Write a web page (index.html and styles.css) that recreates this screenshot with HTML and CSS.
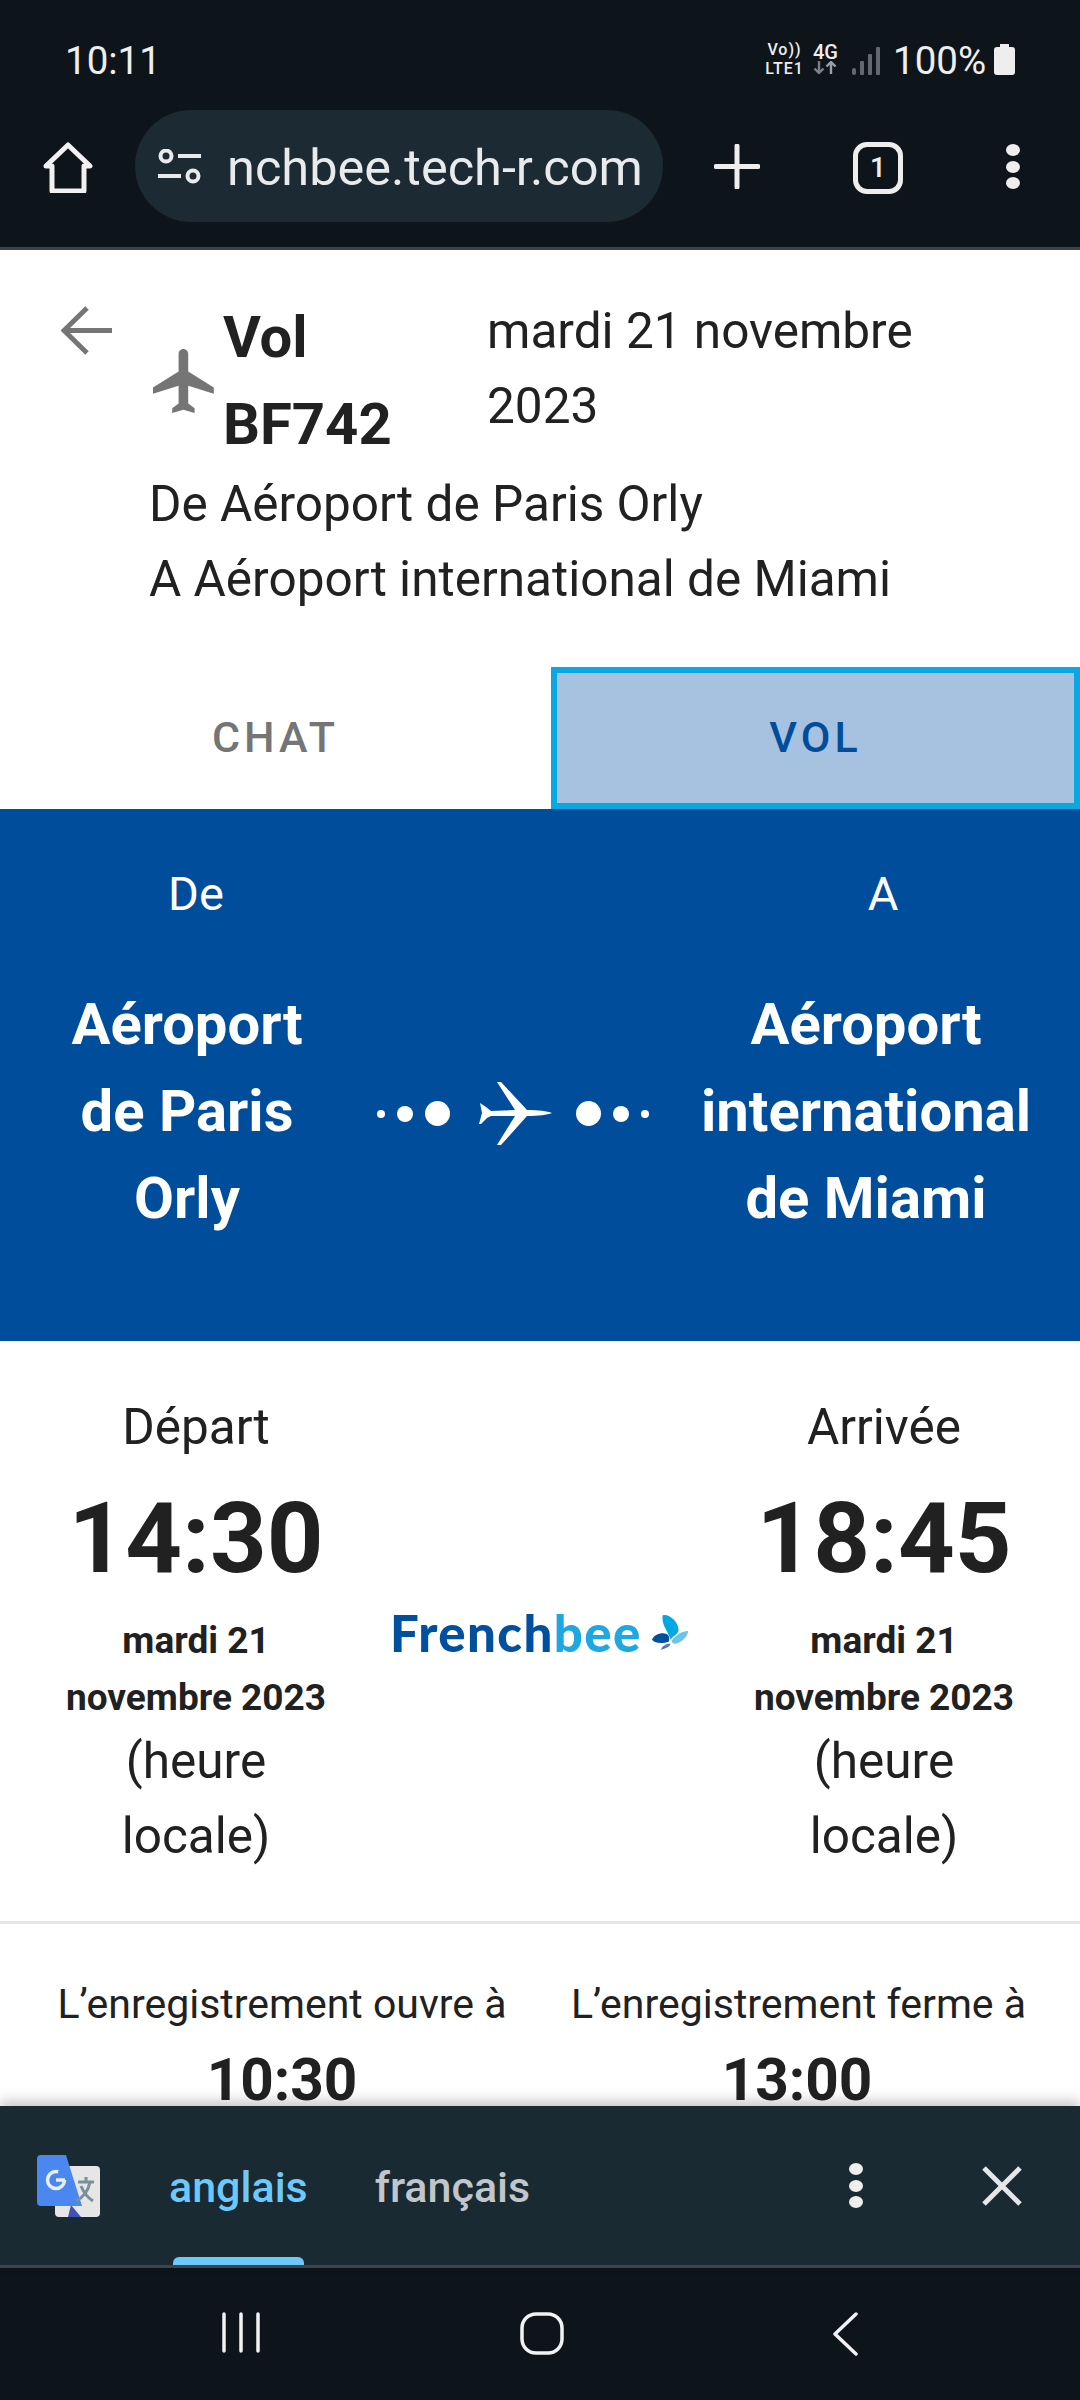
FILE: index.html
```html
<!DOCTYPE html>
<html lang="fr">
<head>
    <meta charset="UTF-8">
    <meta name="viewport" content="width=device-width, initial-scale=1.0">
    <title>Vol BF742</title>
    <link rel="stylesheet" href="styles.css">
</head>
<body>
    <!-- Barre d'etat du telephone -->
    <div class="status-bar">
        <span class="status-time">10:11</span>
        <div class="status-icons">
            <div class="mini-stack volte"><span>Vo))</span><span>LTE1</span></div>
            <div class="mini-stack net">
                <span>4G</span>
                <svg width="25" height="13" viewBox="0 0 25 13" fill="none" stroke-width="2.4">
                    <path d="M6 0v12M1.5 7.500 6 12l4.500-4.500" stroke="#7b8084"/>
                    <path d="M18 13V1M13.500 5.500 18 1l4.500 4.500" stroke="#9da1a4"/>
                </svg>
            </div>
            <svg class="signal" width="28" height="28" viewBox="0 0 28 28" fill="#62686c">
                <rect x="0" y="21" width="4" height="7" rx="2"/>
                <rect x="8" y="14" width="4" height="14" rx="1"/>
                <rect x="16" y="7" width="4" height="21" rx="1"/>
                <rect x="24" y="0" width="4" height="28" rx="1"/>
            </svg>
            <span class="status-battery">100%</span>
            <svg width="21" height="31" viewBox="0 0 21 31" fill="#eeeeee">
                <path d="M6 0h9v3h3a3 3 0 0 1 3 3v22a3 3 0 0 1-3 3H3a3 3 0 0 1-3-3V6a3 3 0 0 1 3-3h3z"/>
            </svg>
        </div>
    </div>

    <!-- Barre du navigateur -->
    <div class="browser-bar">
        <svg class="home-icon" width="50" height="51" viewBox="0 0 50 51" fill="none" stroke="#f1f1f1" stroke-width="5" stroke-linejoin="round">
            <path d="M25 3 47 24h-6v25H9V24H3z"/>
        </svg>
        <div class="url-pill">
            <svg width="43" height="35" viewBox="0 0 43 35" fill="none" stroke="#e8eaeb" stroke-width="4">
                <circle cx="8" cy="7" r="5.500"/>
                <path d="M20 7h23M0 27h23"/>
                <circle cx="35" cy="27" r="5.500"/>
            </svg>
            <span class="url-text">nchbee.tech-r.com</span>
        </div>
        <svg class="plus-icon" width="46" height="45" viewBox="0 0 46 45" stroke="#eeeeee" stroke-width="5" stroke-linecap="round">
            <path d="M23 2v41M2 22.500h42"/>
        </svg>
        <div class="tab-count">1</div>
        <div class="dots dots-top"><i></i><i></i><i></i></div>
    </div>

    <main class="page">
        <div class="flight-head">
            <svg class="back-icon" width="51" height="49" viewBox="0 0 51 49" fill="none" stroke="#757575" stroke-width="5">
                <path d="M51 24.500H5M26 2 3 24.500 26 47"/>
            </svg>
            <svg class="flight-icon" width="64" height="66" viewBox="2 2 20 20" fill="#757575">
                <path d="M21 16v-2l-8-5V3.500c0-.83-.67-1.500-1.500-1.500S10 2.670 10 3.500V9l-8 5v2l8-2.500V19l-2 1.500V22l3.500-1 3.500 1v-1.500L13 19v-5.500l8 2.500z"/>
            </svg>
            <h1 class="flight-name">Vol BF742</h1>
            <p class="flight-date">mardi 21 novembre 2023</p>
        </div>
        <div class="flight-route">
            <p>De Aéroport de Paris Orly</p>
            <p>A Aéroport international de Miami</p>
        </div>

        <div class="tabs">
            <div class="tab">CHAT</div>
            <div class="tab tab-active">VOL</div>
        </div>

        <section class="route-band">
            <div class="route-end route-from">
                <div class="route-label">De</div>
                <div class="route-name">Aéroport de Paris Orly</div>
            </div>
            <div class="route-path">
                <i class="dot-s"></i><i class="dot-m"></i><i class="dot-l"></i>
                <svg class="route-plane" width="73" height="65" viewBox="0 0 73 65" fill="#fff">
                    <path d="M73 32C68 30 60 29 48 29L22 1H18L36 29 12 30 7 26 1 22 3 32 0 43H2L8 37 12 35 36 35 18 64H22L48 35C60 35 68 34 73 32Z"/>
                </svg>
                <i class="dot-l"></i><i class="dot-m"></i><i class="dot-s"></i>
            </div>
            <div class="route-end route-to">
                <div class="route-label">A</div>
                <div class="route-name">Aéroport international de Miami</div>
            </div>
        </section>

        <section class="times">
            <div class="time-col">
                <div class="time-label">Départ</div>
                <div class="time-big">14:30</div>
                <div class="time-date">mardi 21 novembre 2023</div>
                <div class="time-note">(heure locale)</div>
            </div>
            <div class="airline-logo">
                <span class="logo-text">French<span class="logo-bee">bee</span></span>
                <svg width="37" height="37" viewBox="0 0 37 37">
                    <path d="M11 1C17-1 28 8 27 17 26 21 21 22 19 26 17 18 9 10 11 1Z" fill="#00a7e5"/>
                    <path d="M20 27C24 21 31 17 37 17 36 23 31 28 24 30 22 30 20 29 20 27Z" fill="#6cc4ee"/>
                    <path d="M0 26C2 20 10 18 15 20 18 22 18 25 17 28 11 30 3 30 0 26Z" fill="#00509e"/>
                    <path d="M16 30H19C18 33 14 35 9 36 10 33 13 31 16 30Z" fill="#5d70b8"/>
                </svg>
            </div>
            <div class="time-col">
                <div class="time-label">Arrivée</div>
                <div class="time-big">18:45</div>
                <div class="time-date">mardi 21 novembre 2023</div>
                <div class="time-note">(heure locale)</div>
            </div>
        </section>

        <section class="checkin">
            <div class="checkin-col">
                <div class="checkin-label">L’enregistrement ouvre à</div>
                <div class="checkin-time">10:30</div>
            </div>
            <div class="checkin-col">
                <div class="checkin-label">L’enregistrement ferme à</div>
                <div class="checkin-time">13:00</div>
            </div>
        </section>
    </main>

    <!-- Barre de traduction -->
    <div class="translate-bar">
        <svg class="translate-logo" width="63" height="63" viewBox="0 0 63 63">
            <rect x="18" y="11" width="45" height="51" rx="4" fill="#e6e6e6"/>
            <path d="M34 50 44 62H31z" fill="#3f51b5"/>
            <path d="M4 0H29L45 51H4a4 4 0 0 1-4-4V4a4 4 0 0 1 4-4z" fill="#4a88f0"/>
            <circle cx="19" cy="25" r="8.500" fill="none" stroke="#e8eefc" stroke-width="3.500" stroke-dasharray="42 11"/>
            <path d="M19 25h9" stroke="#e8eefc" stroke-width="3.500"/>
            <path d="M41 27H57M49 22v5M53 27C51 37 45 43 39 46M44 31C47 38 51 43 56 46" fill="none" stroke="#78909c" stroke-width="3"/>
        </svg>
        <div class="lang lang-active">anglais</div>
        <div class="lang">français</div>
        <div class="dots dots-translate"><i></i><i></i><i></i></div>
        <svg class="close-icon" width="40" height="40" viewBox="0 0 40 40" stroke="#e4e6e7" stroke-width="5">
            <path d="M2 2 38 38M38 2 2 38"/>
        </svg>
    </div>

    <!-- Barre de navigation du telephone -->
    <div class="nav-bar">
        <svg width="38" height="41" viewBox="0 0 38 41" stroke="#f2f2f2" stroke-width="3.500" stroke-linecap="round">
            <path d="M2 2v37M19 2v37M36 2v37"/>
        </svg>
        <svg class="nav-home" width="44" height="43" viewBox="0 0 44 43" fill="none" stroke="#f2f2f2" stroke-width="3.500">
            <rect x="2" y="2" width="40" height="39" rx="14"/>
        </svg>
        <svg width="25" height="44" viewBox="0 0 25 44" fill="none" stroke="#f2f2f2" stroke-width="3.500" stroke-linecap="round" stroke-linejoin="round">
            <path d="M23 2 2 22l21 20"/>
        </svg>
    </div>
</body>
</html>
```

FILE: styles.css
```css
* {
    box-sizing: border-box;
}

body {
    margin: 0;
    width: 1080px;
    height: 2400px;
    overflow: hidden;
    display: flex;
    flex-direction: column;
    font-family: Roboto, "Noto Sans", sans-serif;
    color: #212121;
    background: #fff;
}

/* barres du haut */
.status-bar {
    height: 110px;
    flex: none;
    display: flex;
    justify-content: space-between;
    padding: 44px 65px 0 65px;
    background: #0d141a;
    color: #eeeeee;
}

.status-time {
    font-size: 38.5px;
    line-height: 33px;
}

.status-icons {
    display: flex;
    align-items: flex-start;
}

.mini-stack {
    display: flex;
    flex-direction: column;
    align-items: center;
    font-weight: 500;
}

.volte {
    width: 37px;
    margin-top: -4px;
    font-size: 16px;
    line-height: 19px;
    letter-spacing: 1px;
}

.net {
    width: 25px;
    margin-left: 10px;
    font-size: 20px;
    line-height: 16px;
    gap: 1px;
}

.signal {
    margin: 3px 0 0 14px;
}

.status-battery {
    margin-left: 13px;
    width: 101px;
    font-size: 38.5px;
    line-height: 33px;
}

.browser-bar {
    height: 140px;
    flex: none;
    display: flex;
    align-items: flex-start;
    background: #0d141a;
    border-bottom: 3px solid #3c4449;
}

.home-icon {
    margin: 32px 0 0 43px;
}

.url-pill {
    width: 528px;
    height: 112px;
    margin-left: 42px;
    display: flex;
    align-items: center;
    gap: 26px;
    padding-left: 23px;
    background: #1b2a33;
    border-radius: 56px;
    color: #e8eaeb;
}

.url-text {
    padding-top: 2px;
    font-size: 50.5px;
    white-space: nowrap;
}

.plus-icon {
    margin: 34px 0 0 51px;
}

.tab-count {
    width: 50px;
    height: 52px;
    margin: 32px 0 0 93px;
    border: 5px solid #eeeeee;
    border-radius: 14px;
    color: #eeeeee;
    font-size: 28px;
    font-weight: 500;
    line-height: 42px;
    text-align: center;
}

.dots {
    display: flex;
    flex-direction: column;
    justify-content: space-between;
    width: 14px;
    height: 45px;
}

.dots i {
    display: block;
    width: 14px;
    height: 12px;
    border-radius: 50%;
    background: #eeeeee;
}

.dots-top {
    margin: 34px 0 0 103px;
}

/* contenu de la page */
.page {
    flex: 1;
    min-height: 0;
}

.flight-head {
    display: flex;
    padding-top: 44px;
}

.back-icon {
    margin: 12px 0 0 61px;
}

.flight-icon {
    margin: 54px 0 0 41px;
}

.flight-name {
    width: 264px;
    margin: 0 0 0 6px;
    font-size: 58px;
    font-weight: 700;
    line-height: 87px;
}

.flight-date {
    width: 500px;
    margin: 0;
    font-size: 49.5px;
    line-height: 75px;
}

.flight-route {
    margin-top: -1px;
    padding-left: 149px;
    font-size: 49.5px;
    line-height: 75px;
}

.flight-route p {
    margin: 0;
}

.tabs {
    display: flex;
    height: 142px;
    margin-top: 50px;
}

.tab {
    display: flex;
    align-items: center;
    justify-content: center;
    width: 551px;
    padding-bottom: 2px;
    font-size: 43px;
    font-weight: 500;
    letter-spacing: 4px;
    color: #757575;
}

.tab-active {
    width: 529px;
    background: #a7c2e0;
    border: 6px solid #0aa8e3;
    color: #004e9b;
}

.route-band {
    display: flex;
    height: 532px;
    padding-top: 47px;
    background: #004e9b;
    color: #fff;
}

.route-from {
    width: 377px;
}

.route-from .route-label {
    padding-left: 15px;
}

.route-from .route-name {
    margin: 0 40px 0 37px;
}

.route-to {
    width: 431px;
    padding-left: 3px;
}

.route-to .route-label {
    padding-left: 34px;
}

.route-to .route-name {
    margin: 0 44px;
}

.route-end {
    text-align: center;
}

.route-label {
    font-size: 47px;
    line-height: 75px;
    margin-bottom: 50px;
}

.route-name {
    font-size: 58px;
    font-weight: 700;
    line-height: 87px;
}

.route-path {
    width: 272px;
    height: 65px;
    margin-top: 225px;
    display: flex;
    align-items: center;
}

.route-path i {
    display: block;
    flex: none;
    border-radius: 50%;
    background: #fff;
}

.dot-s {
    width: 8px;
    height: 8px;
}

.dot-m {
    width: 16px;
    height: 16px;
    margin: 0 12px;
}

.dot-l {
    width: 25px;
    height: 25px;
}

.route-plane {
    flex: none;
    margin: 0 24px 0 29px;
}

.times {
    display: grid;
    grid-template-columns: 392px 296px 392px;
    padding: 49px 0 47px;
    align-items: center;
}

.time-col {
    text-align: center;
}

.time-label {
    font-size: 49.5px;
    line-height: 75px;
}

.time-big {
    font-size: 99px;
    font-weight: 700;
    line-height: 147px;
}

.time-date {
    width: 275px;
    margin: 0 auto;
    font-size: 37px;
    font-weight: 700;
    line-height: 57px;
}

.time-note {
    width: 240px;
    margin: -2px auto 0;
    font-size: 49.5px;
    line-height: 75px;
}

.airline-logo {
    display: flex;
    align-items: center;
    gap: 10px;
    margin-left: -2px;
}

.logo-text {
    font-family: Lato, sans-serif;
    font-size: 51px;
    font-weight: 900;
    letter-spacing: 1.4px;
    line-height: 1;
    color: #00509e;
}

.logo-bee {
    color: #1ea7e0;
}

.checkin {
    display: flex;
    gap: 63px;
    padding: 48px 0 0 56px;
    border-top: 3px solid #e6e6e6;
}

.checkin-col {
    width: 452px;
    text-align: center;
}

.checkin-label {
    font-size: 41px;
    line-height: 64px;
    white-space: nowrap;
}

.checkin-time {
    margin-top: 14px;
    font-size: 58.5px;
    font-weight: 700;
    line-height: 60px;
}

/* barre de traduction */
.translate-bar {
    position: relative;
    height: 162px;
    flex: none;
    display: flex;
    align-items: flex-start;
    background: #1a2a33;
    border-bottom: 3px solid #3c4449;
    box-shadow: 0 -5px 12px rgba(0, 0, 0, 0.22);
}

.translate-logo {
    margin: 49px 0 0 37px;
}

.lang {
    position: relative;
    height: 159px;
    font-size: 43px;
    font-weight: 500;
    line-height: 162px;
    color: #c0c6ca;
}

.lang-active {
    margin: 0 67px 0 69px;
    color: #6dc9fc;
}

/* trait sous la langue choisie */
.lang-active::after {
    content: "";
    position: absolute;
    left: 4px;
    right: 4px;
    bottom: 0;
    height: 8px;
    border-radius: 6px 6px 0 0;
    background: #6dc9fc;
}

.dots-translate {
    margin: 57px 0 0 319px;
}

.close-icon {
    margin: 60px 0 0 119px;
}

.nav-bar {
    height: 132px;
    flex: none;
    display: flex;
    align-items: flex-start;
    justify-content: space-between;
    padding: 44px 222px 0;
    background: #0d141a;
}

.nav-home {
    margin-right: 10px;
}
```
